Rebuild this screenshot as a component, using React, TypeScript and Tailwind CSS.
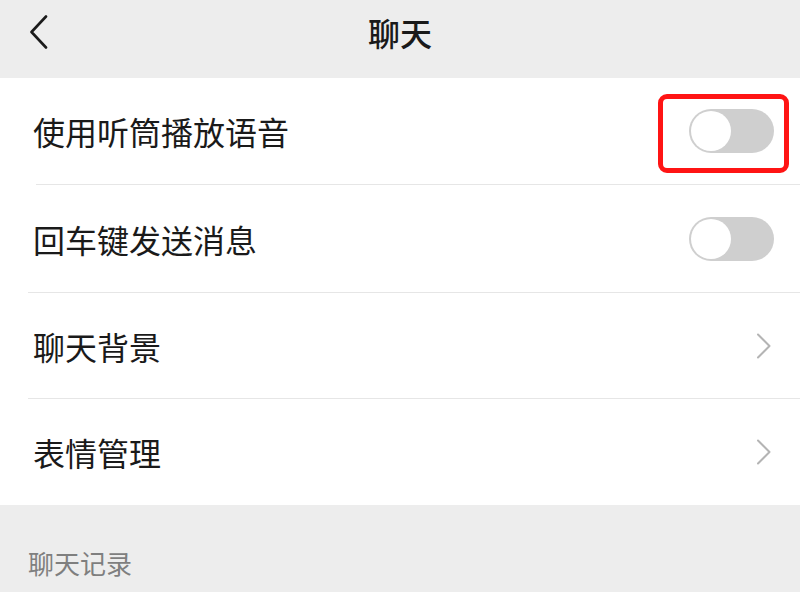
import React, { useState } from 'react';

const Toggle: React.FC<{ on: boolean; onClick: () => void }> = ({ on, onClick }) => (
  <button
    onClick={onClick}
    className={`relative w-[85px] h-[44px] rounded-full flex items-center p-[2px] ${on ? 'bg-[#07c160] justify-end' : 'bg-[#cfcfcf] justify-start'}`}
  >
    <span className="block w-[40px] h-[40px] rounded-full bg-white" />
  </button>
);

const Chevron: React.FC = () => (
  <svg width="16" height="26" viewBox="0 0 16 26" fill="none">
    <path d="M2 1.5 L13.5 13 L2 24.5" stroke="#b4b4b4" strokeWidth="2" strokeLinecap="round" strokeLinejoin="round" />
  </svg>
);

const App: React.FC = () => {
  const [earpiece, setEarpiece] = useState(false);
  const [enterSend, setEnterSend] = useState(false);

  return (
    <div className="w-[800px] h-[600px] bg-white font-['Noto_Sans_CJK_SC','Noto_Sans',sans-serif] text-[#1a1a1a] overflow-hidden">
      {/* header */}
      <div className="h-[78px] bg-[#ededed] flex items-center relative">
        <button className="absolute left-[28px] top-[15px]">
          <svg width="22" height="34" viewBox="0 0 22 34" fill="none">
            <path d="M18 1.5 L3.5 17 L18 32.5" stroke="#1a1a1a" strokeWidth="2.6" strokeLinecap="round" strokeLinejoin="round" />
          </svg>
        </button>
        <h1 className="flex-1 text-center text-[32px] leading-none font-medium pb-[14px]">聊天</h1>
      </div>

      {/* settings list */}
      <div className="bg-white">
        <div className="h-[106px] flex items-center justify-between pl-[33px] pr-[26px]">
          <span className="text-[32px] leading-none">使用听筒播放语音</span>
          <div className="relative">
            <Toggle on={earpiece} onClick={() => setEarpiece(!earpiece)} />
            <div className="absolute left-[-31px] top-[-15px] w-[131px] h-[79px] border-[5px] border-[#ff1414] rounded-[9px] pointer-events-none" />
          </div>
        </div>
        <div className="ml-[36px] h-px bg-[#e6e6e6]" />
        <div className="h-[107px] flex items-center justify-between pl-[33px] pr-[26px]">
          <span className="text-[32px] leading-none">回车键发送消息</span>
          <Toggle on={enterSend} onClick={() => setEnterSend(!enterSend)} />
        </div>
        <div className="ml-[28px] h-px bg-[#e6e6e6]" />
        <div className="h-[105px] flex items-center justify-between pl-[33px] pr-[28px]">
          <span className="text-[32px] leading-none">聊天背景</span>
          <Chevron />
        </div>
        <div className="ml-[28px] h-px bg-[#e6e6e6]" />
        <div className="h-[106px] flex items-center justify-between pl-[33px] pr-[28px]">
          <span className="text-[32px] leading-none">表情管理</span>
          <Chevron />
        </div>
      </div>

      {/* section label */}
      <div className="h-[87px] bg-[#ededed] flex items-end pl-[28px] pb-[16px]">
        <span className="text-[26px] leading-none text-[#7f7f7f]">聊天记录</span>
      </div>
      <div className="h-[8px] bg-white" />
    </div>
  );
};

export default App;
